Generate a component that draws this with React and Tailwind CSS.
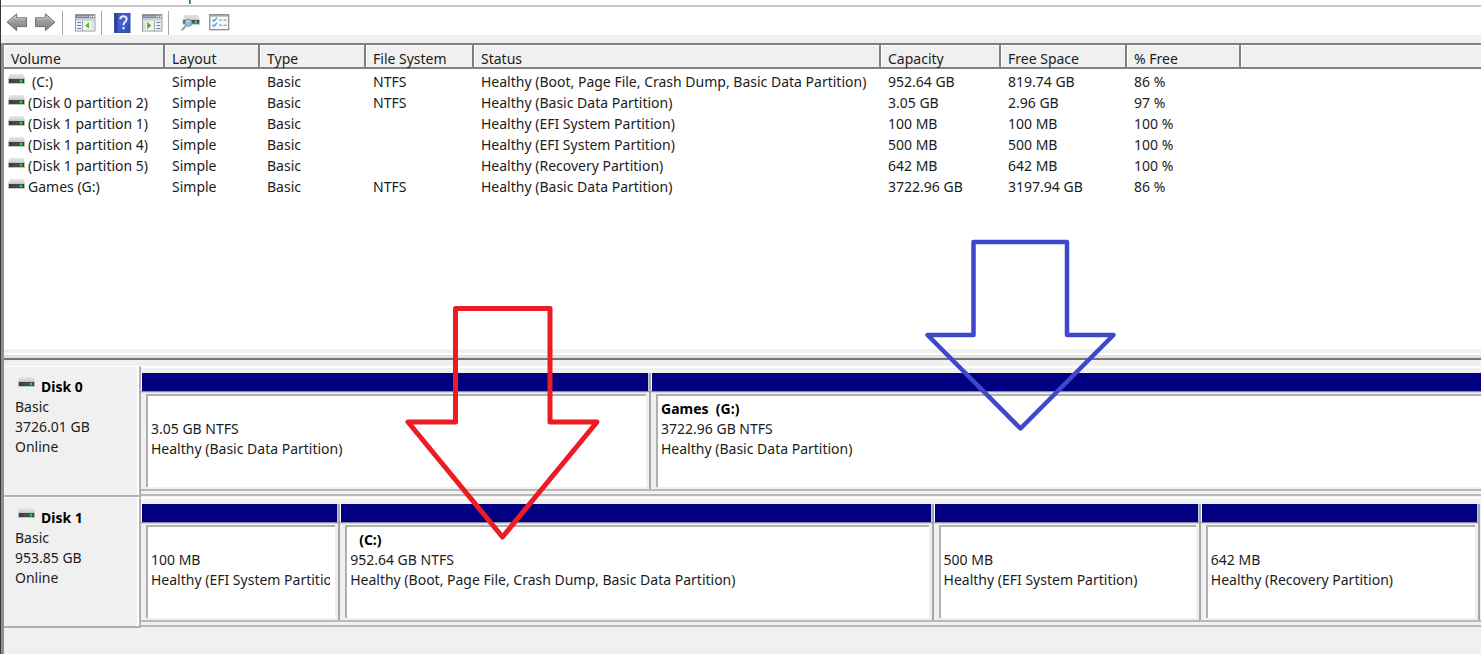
import React from "react";

const volumes = [
  { name: "(C:)", indent: true, fs: "NTFS", status: "Healthy (Boot, Page File, Crash Dump, Basic Data Partition)", capacity: "952.64 GB", free: "819.74 GB", pct: "86 %" },
  { name: "(Disk 0 partition 2)", fs: "NTFS", status: "Healthy (Basic Data Partition)", capacity: "3.05 GB", free: "2.96 GB", pct: "97 %" },
  { name: "(Disk 1 partition 1)", fs: "", status: "Healthy (EFI System Partition)", capacity: "100 MB", free: "100 MB", pct: "100 %" },
  { name: "(Disk 1 partition 4)", fs: "", status: "Healthy (EFI System Partition)", capacity: "500 MB", free: "500 MB", pct: "100 %" },
  { name: "(Disk 1 partition 5)", fs: "", status: "Healthy (Recovery Partition)", capacity: "642 MB", free: "642 MB", pct: "100 %" },
  { name: "Games (G:)", fs: "NTFS", status: "Healthy (Basic Data Partition)", capacity: "3722.96 GB", free: "3197.94 GB", pct: "86 %" },
];

const columns = ["Volume", "Layout", "Type", "File System", "Status", "Capacity", "Free Space", "% Free"];

function DriveIcon({ className = "" }) {
  return (
    <svg width="17" height="11" viewBox="0 0 17 11" className={className} aria-hidden="true">
      <defs>
        <linearGradient id="driveTop" x1="0" y1="0" x2="0" y2="1">
          <stop offset="0" stopColor="#e6e8ea" />
          <stop offset="1" stopColor="#c8ccd0" />
        </linearGradient>
        <linearGradient id="driveFront" x1="0" y1="0" x2="1" y2="0">
          <stop offset="0" stopColor="#3a3a3a" />
          <stop offset="0.5" stopColor="#4c4c4c" />
          <stop offset="1" stopColor="#3c3c3c" />
        </linearGradient>
      </defs>
      <path d="M1.6 0H15.4L17 5H0Z" fill="url(#driveTop)" />
      <rect x="0" y="4.6" width="17" height="5.2" fill="#b4b8bb" />
      <rect x="1" y="5" width="15" height="4" fill="url(#driveFront)" />
      <rect x="11" y="6" width="4" height="2" fill="#178a1f" />
      <rect x="12.2" y="5.6" width="1.6" height="2.8" fill="#35e83c" />
    </svg>
  );
}

function ArrowIcon({ flip }) {
  const id = flip ? "arrowR" : "arrowL";
  return (
    <svg width="22" height="20" viewBox="0 0 22 20" className={flip ? "-scale-x-100" : ""} aria-hidden="true">
      <defs>
        <linearGradient id={id} x1="0" y1="0" x2="0" y2="1">
          <stop offset="0" stopColor="#b4b4b4" />
          <stop offset="0.5" stopColor="#9a9a9a" />
          <stop offset="1" stopColor="#7c7c7c" />
        </linearGradient>
      </defs>
      <path d="M1 9.2L10.6 0.8V4.8H20.5V13.6H10.6V17.6Z" fill={`url(#${id})`} stroke="#6e6e6e" strokeLinejoin="round" />
      <path d="M3 8.8L9.6 3V5.8H19.6" fill="none" stroke="#cfcfcf" strokeWidth="0.8" />
    </svg>
  );
}

function PaneIcon({ right }) {
  return (
    <svg width="21" height="18" viewBox="0 0 21 18" aria-hidden="true">
      <rect x="0.5" y="0.5" width="19.5" height="16.5" fill="#f4f4f4" stroke="#96999d" />
      <rect x="1" y="1" width="18.5" height="3" fill="#7f8890" />
      <rect x="2" y="2" width="11" height="1" fill="#aab0b7" />
      <path d="M14 2.5h1.3M16 2.5h1.3M18 2.5h1.3" stroke="#eef2f6" strokeWidth="1.3" />
      <rect x="1" y="4" width="18.5" height="2.6" fill="#c9cdd1" />
      {right ? (
        <>
          <path d="M12.5 6.6V17" stroke="#a0a4a8" />
          <rect x="1" y="6.6" width="3" height="10" fill="#dcdfe2" />
          <path d="M5.2 7.8L9.4 11.5L5.2 15.2Z" fill="#42b52c" />
          <path d="M14.5 8.5h4M14.5 11.5h4M14.5 14.5h4" stroke="#4a80b8" strokeWidth="1.2" />
        </>
      ) : (
        <>
          <path d="M7.5 6.6V17" stroke="#a0a4a8" />
          <path d="M2.2 8.5h4M2.2 11.5h4M2.2 14.5h4" stroke="#4a80b8" strokeWidth="1.2" />
          <path d="M14 8.3V14.7L10 11.5Z" fill="#42c42c" />
          <rect x="16.5" y="6.6" width="3" height="10" fill="#dcdfe2" />
        </>
      )}
    </svg>
  );
}

function HelpIcon() {
  return (
    <svg width="17" height="20" viewBox="0 0 17 20" aria-hidden="true">
      <defs>
        <linearGradient id="helpBook" x1="0" y1="0" x2="1" y2="1">
          <stop offset="0" stopColor="#4058b8" />
          <stop offset="0.5" stopColor="#3f62d2" />
          <stop offset="1" stopColor="#2a46ac" />
        </linearGradient>
      </defs>
      <rect x="0.5" y="0.5" width="15.5" height="19" fill="url(#helpBook)" stroke="#3c4f9c" />
      <rect x="1" y="1" width="2.6" height="18" fill="#2b429c" />
      <path d="M6.3 6.2C6.4 2.4 12.8 2.2 12.6 6.2C12.5 8.8 9.6 8.8 9.5 12.2" fill="none" stroke="#e8ecfa" strokeWidth="2.1" />
      <rect x="8.4" y="14" width="2.3" height="2.3" fill="#e8ecfa" />
    </svg>
  );
}

function SearchDriveIcon() {
  return (
    <svg width="20" height="18" viewBox="0 0 20 18" aria-hidden="true">
      <path d="M3.6 1H16.6L18.6 6H2Z" fill="#d9dcdf" />
      <rect x="1.6" y="5.6" width="17.2" height="5" fill="#a9adb0" />
      <rect x="2.4" y="6" width="15.6" height="3.6" fill="#474b4c" />
      <rect x="12.5" y="6.8" width="4.5" height="2" fill="#1b8f23" />
      <rect x="14" y="6.4" width="1.6" height="2.8" fill="#3bea43" />
      <path d="M5 11.8L1.2 15.8" stroke="#98a2aa" strokeWidth="2" strokeLinecap="round" />
      <circle cx="7.4" cy="8.8" r="3.4" fill="#8fbfdf" stroke="#8499a8" strokeWidth="1.1" />
      <path d="M5.6 8.2A2 2 0 0 1 8 6.8" fill="none" stroke="#e9f6ff" />
    </svg>
  );
}

function ChecklistIcon() {
  return (
    <svg width="21" height="19" viewBox="0 0 21 19" aria-hidden="true">
      <rect x="0.7" y="0.7" width="19" height="15" fill="#f8f9fa" stroke="#8b8f93" strokeWidth="1.3" />
      <rect x="1" y="1" width="18.5" height="1.6" fill="#a4a8ac" />
      <path d="M3.5 5.6L5 7L8 3.8M3.5 10.8L5 12.2L8 9" fill="none" stroke="#4aa5e8" strokeWidth="1.5" />
      <path d="M10 6h3M14.5 6h3M10 11.2h3M14.5 11.2h3" stroke="#a6aaae" strokeWidth="1.4" />
    </svg>
  );
}

function ToolButton({ label, className = "", children }) {
  return (
    <button type="button" aria-label={label} className={`flex shrink-0 items-center justify-center ${className}`}>
      {children}
    </button>
  );
}

function Separator() {
  return <div className="h-6 w-px shrink-0 bg-[#a8a8a8]" />;
}

function Partition({ title, indent, size, health, open }) {
  return (
    <section className={`flex min-w-0 flex-col ${open ? "" : "border-r-2 border-[#a6a6a6]"}`}>
      <div className={`h-[18px] border-l border-l-white bg-[#000080] ${open ? "" : "border-r border-r-[#c8c8c8]"}`} />
      <div className="h-[2px] border-t border-[#8c8c98] bg-[#d8d8d8]" />
      <div className={`mt-px mb-0.5 ml-[5px] h-[93px] border-t-2 border-l-2 border-[#b0b0b0] bg-white pt-[3px] pl-[3px] ${open ? "" : "mr-[3px] pr-[5px]"}`}>
        <div className="overflow-hidden leading-5 whitespace-pre">
          <h3 className={`h-5 font-bold text-black ${indent ? "pl-[9px]" : ""}`}>{title}</h3>
          <p>{size}</p>
          <p>{health}</p>
        </div>
      </div>
    </section>
  );
}

function DiskRow({ name, size, grid, children }) {
  return (
    <div className="flex h-[131px]">
      <div className="w-[137px] shrink-0 border-t border-r-2 border-b-2 border-t-white border-r-[#b0b0b0] border-b-[#b0b0b0]">
        <div className="h-full border-r-2 border-white pt-[10px] pl-[11px] leading-5">
          <div className="flex h-5 items-start gap-1.5 pl-[3px]">
            <DriveIcon />
            <h2 className="font-bold text-black">{name}</h2>
          </div>
          <p>Basic</p>
          <p>{size}</p>
          <p>Online</p>
        </div>
      </div>
      <div className="min-w-0 flex-1 border-t-2 border-t-white">
        <div className={`mt-[5px] grid border-b-2 border-[#b8b8b8] ${grid}`}>{children}</div>
        <div className="mt-[3px] h-[2px] bg-[#b8b8b8]" />
      </div>
    </div>
  );
}

export default function App() {
  return (
    <div className="relative flex min-h-screen flex-col overflow-hidden border-l border-[#3b3644] bg-[#f0f0f0] font-['Noto_Sans','Open_Sans',sans-serif] text-[14px] text-[#1c1c1c]">
      <nav className="flex h-[5px] items-end overflow-hidden bg-white pl-[165px]">
        <button type="button" className="leading-5">Help</button>
      </nav>
      <div className="flex h-[30px] items-center border-t-2 border-[#c8c8c8] bg-white pt-1 pl-[5px]">
        <ToolButton label="Back"><ArrowIcon /></ToolButton>
        <ToolButton label="Forward" className="ml-1.5"><ArrowIcon flip /></ToolButton>
        <div className="ml-1.5 flex items-center gap-3">
          <Separator />
          <ToolButton label="Show or hide console tree"><PaneIcon /></ToolButton>
        </div>
        <div className="ml-[5px] flex items-center gap-3">
          <Separator />
          <ToolButton label="Help"><HelpIcon /></ToolButton>
          <ToolButton label="Show or hide action pane" className="-ml-px"><PaneIcon right /></ToolButton>
        </div>
        <div className="ml-[5px] flex items-center gap-3">
          <Separator />
          <ToolButton label="Rescan disks"><SearchDriveIcon /></ToolButton>
          <ToolButton label="Settings" className="-ml-1"><ChecklistIcon /></ToolButton>
        </div>
      </div>

      <div className="mt-2 flex flex-1 flex-col border-l-[3px] border-[#8f8f8f]">
        <div className="h-[306px] overflow-hidden border-t-2 border-[#808080] bg-white">
          <table className="w-full table-fixed border-collapse text-left whitespace-nowrap">
            <colgroup>
              <col className="w-[161px]" />
              <col className="w-[95px]" />
              <col className="w-[106px]" />
              <col className="w-[108px]" />
              <col className="w-[407px]" />
              <col className="w-[120px]" />
              <col className="w-[126px]" />
              <col className="w-[114px]" />
              <col />
            </colgroup>
            <thead>
              <tr>
                {columns.map((c) => (
                  <th key={c} scope="col" className="h-6 p-0 font-normal">
                    <div className="h-6 border-r-2 border-b-2 border-[#808080] bg-[#f0f0f0]">
                      <div className="h-full border-t border-l border-white pt-[3px] pl-1.5 leading-5">{c}</div>
                    </div>
                  </th>
                ))}
                <td className="h-6 p-0">
                  <div className="h-6 border-b-2 border-[#808080] bg-[#f0f0f0]">
                    <div className="h-full border-t border-l border-white" />
                  </div>
                </td>
              </tr>
            </thead>
            <tbody className="before:block before:h-0.5">
              {volumes.map((v) => (
                <tr key={v.name} className="h-[21px] leading-[21px]">
                  <td className="p-0">
                    <div className="flex items-start gap-[3px] pl-1">
                      <DriveIcon className="mt-[3px] shrink-0" />
                      <span className={v.indent ? "pl-1" : ""}>{v.name}</span>
                    </div>
                  </td>
                  <td className="p-0 pl-[7px]">Simple</td>
                  <td className="p-0 pl-[7px]">Basic</td>
                  <td className="p-0 pl-[7px]">{v.fs}</td>
                  <td className="p-0 pl-[7px]">{v.status}</td>
                  <td className="p-0 pl-[7px]">{v.capacity}</td>
                  <td className="p-0 pl-[7px]">{v.free}</td>
                  <td className="p-0 pl-[7px]">{v.pct}</td>
                </tr>
              ))}
            </tbody>
          </table>
        </div>
        <div className="mt-1 h-[5px] border-t-2 border-t-white bg-[#e3e3e3]" />
        <div className="h-[2px] bg-[#757575]" />
        <div className="h-1.5" />

        <DiskRow name="Disk 0" size="3726.01 GB" grid="grid-cols-[minmax(0,510fr)_minmax(0,830fr)]">
          <Partition size="3.05 GB NTFS" health="Healthy (Basic Data Partition)" />
          <Partition open title="Games  (G:)" size="3722.96 GB NTFS" health="Healthy (Basic Data Partition)" />
        </DiskRow>
        <DiskRow name="Disk 1" size="953.85 GB" grid="grid-cols-[minmax(0,199fr)_minmax(0,593fr)_minmax(0,267fr)_minmax(0,279fr)] pr-px">
          <Partition size="100 MB" health="Healthy (EFI System Partition)" />
          <Partition title="(C:)" indent size="952.64 GB NTFS" health="Healthy (Boot, Page File, Crash Dump, Basic Data Partition)" />
          <Partition size="500 MB" health="Healthy (EFI System Partition)" />
          <Partition size="642 MB" health="Healthy (Recovery Partition)" />
        </DiskRow>
      </div>

      <svg className="pointer-events-none absolute top-[300px] left-[400px]" width="206" height="246" viewBox="401 300 206 246" aria-hidden="true">
        <path d="M455.5 308.5H550V422H597L502.5 537L408 422H455.5Z" fill="none" stroke="#ed1c24" strokeWidth="5" strokeLinejoin="round" />
      </svg>
      <svg className="pointer-events-none absolute top-[234px] left-[919px]" width="204" height="202" viewBox="920 234 204 202" aria-hidden="true">
        <path d="M973.5 242H1067V335H1113.5L1020.5 428.5L927.5 335H973.5Z" fill="none" stroke="#3f48cc" strokeWidth="4.5" strokeLinejoin="round" />
      </svg>
    </div>
  );
}
